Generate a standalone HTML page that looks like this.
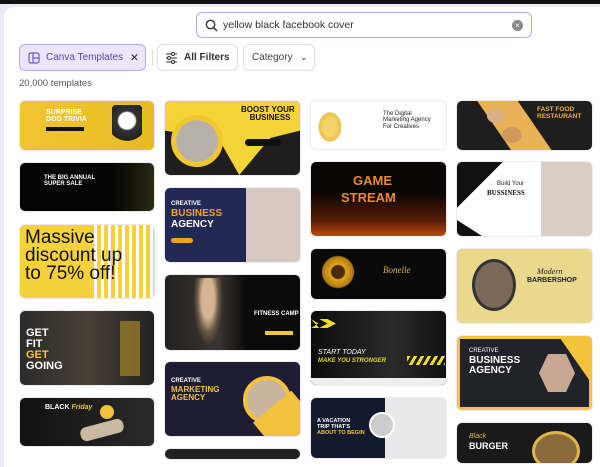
<!DOCTYPE html>
<html><head><meta charset="utf-8"><style>
*{margin:0;padding:0;box-sizing:border-box}
body{width:600px;height:452px;overflow:hidden;background:#ecebf5;font-family:"Liberation Sans",sans-serif;position:relative}
.top{position:absolute;left:0;top:0;width:600px;height:4px;background:#111}
.panel{position:absolute;left:4px;top:7px;width:600px;height:460px;background:#fff;border-radius:10px 0 0 0}
.search{position:absolute;left:196px;top:12px;width:336px;height:26px;border:1px solid #b7a9ee;border-radius:6px;background:#fff}
.search .t{position:absolute;left:26px;top:6px;font-size:10.5px;color:#333}
.chip{position:absolute;top:44px;height:27px;border:1px solid #ddd;border-radius:6px;font-size:10.5px;color:#333;background:#fff}
.chip span{position:absolute;top:7px;white-space:nowrap}
.count{position:absolute;left:19px;top:78px;font-size:9.5px;color:#555}
.c{position:absolute;border-radius:5px;overflow:hidden;box-shadow:0 0 0 1px rgba(0,0,0,.08)}
.c b{position:absolute;font-weight:bold;white-space:nowrap;line-height:1}
.img{position:absolute}
</style></head><body>
<div class="top"></div>
<div class="panel"></div>
<div class="search">
<svg style="position:absolute;left:8px;top:6px" width="13" height="13" viewBox="0 0 13 13"><circle cx="5.5" cy="5.5" r="4.2" fill="none" stroke="#333" stroke-width="1.4"/><path d="M8.6 8.6L12 12" stroke="#333" stroke-width="1.5"/></svg>
<span class="t">yellow black facebook cover</span>
<div style="position:absolute;right:8px;top:7px;width:11px;height:11px;border-radius:50%;background:#888;color:#fff;font-size:8px;line-height:11px;text-align:center">×</div>
</div>
<div class="chip" style="left:19px;width:127px;background:#ebe6fd;border-color:#b9a9ee">
<svg style="position:absolute;left:8px;top:7px" width="12" height="12" viewBox="0 0 12 12"><rect x="1" y="1" width="10" height="10" rx="2" fill="none" stroke="#6f55c9" stroke-width="1.2"/><path d="M5 1V11M5 6H11" stroke="#6f55c9" stroke-width="1.2"/></svg>
<span style="left:26px;color:#5a4aa0;font-size:10px">Canva Templates</span><span style="left:110px;color:#222">✕</span></div>
<div style="position:absolute;left:152px;top:50px;width:1px;height:16px;background:#ddd"></div>
<div class="chip" style="left:157px;width:81px">
<svg style="position:absolute;left:7px;top:7px" width="13" height="12" viewBox="0 0 13 12"><path d="M1 2H12M1 6H12M1 10H12" stroke="#333" stroke-width="1"/><circle cx="8" cy="2" r="1.5" fill="#fff" stroke="#333"/><circle cx="4" cy="6" r="1.5" fill="#fff" stroke="#333"/><circle cx="8" cy="10" r="1.5" fill="#fff" stroke="#333"/></svg>
<span style="left:26px;font-weight:bold;font-size:10px">All Filters</span></div>
<div class="chip" style="left:243px;width:72px"><span style="left:8px;color:#444;font-size:10px">Category</span><span style="left:56px;font-size:9px;top:7px">⌄</span></div>
<div class="count">20,000 templates</div>

<!-- col1 -->
<div class="c" style="left:20px;top:101px;width:134px;height:49px;background:linear-gradient(90deg,#f0c530,#e7bb22)">
<b style="left:26px;top:8px;font-size:7px;color:#fff">SURPRISE<br>DOG TRIVIA</b><div class="img" style="left:26px;top:26px;width:38px;height:4px;background:#111"></div>
<div class="img" style="left:92px;top:4px;width:30px;height:45px;background:radial-gradient(circle at 50% 35%,#fff 0 25%,#333 30%,#222 60%,transparent 62%)"></div></div>
<div class="c" style="left:20px;top:163px;width:134px;height:48px;background:linear-gradient(90deg,#050505 70%,#2a2a16)">
<b style="left:24px;top:12px;font-size:6px;color:#fff">THE BIG ANNUAL<br>SUPER SALE</b></div>
<div class="c" style="left:20px;top:225px;width:134px;height:73px;background:repeating-linear-gradient(90deg,#f5d13b 0 4px,#fff 4px 7px)">
<div class="img" style="left:0;top:0;width:74px;height:73px;background:#f5d13b"></div>
<b style="left:5px;top:4px;font-size:19px;color:#111;font-weight:normal;line-height:.95">Massive<br>discount up<br>to 75% off!</b></div>
<div class="c" style="left:20px;top:311px;width:134px;height:74px;background:linear-gradient(90deg,#2b2b2b,#4a4036 50%,#222)">
<b style="left:6px;top:17px;font-size:11px;color:#fff;line-height:1">GET<br>FIT<br><span style="color:#f3c437">GET</span><br>GOING</b>
<div class="img" style="left:100px;top:10px;width:20px;height:55px;background:#b8962c;opacity:.6"></div></div>
<div class="c" style="left:20px;top:398px;width:134px;height:48px;background:linear-gradient(90deg,#111,#2a2a2a)">
<b style="left:25px;top:6px;font-size:7px;color:#fff">BLACK<i style="color:#f0c13a"> Friday</i></b>
<div class="img" style="left:80px;top:7px;width:14px;height:14px;border-radius:50%;background:#f0c13a"></div>
<div class="img" style="left:60px;top:25px;width:44px;height:14px;background:#c9b9a0;border-radius:6px;transform:rotate(-15deg)"></div></div>

<!-- col2 -->
<div class="c" style="left:165px;top:101px;width:135px;height:74px;background:#1e1e1e">
<div class="img" style="left:0;top:0;width:135px;height:74px;background:#f5d437;clip-path:polygon(0 0,100% 0,100% 40%,78% 50%,55% 100%,40% 52%,0 40%)"></div>
<div class="img" style="left:6px;top:14px;width:52px;height:52px;border-radius:50%;background:#f5d437;border:5px solid #f1c72b;box-shadow:inset 0 0 0 40px #b6b0a8"></div>
<b style="left:76px;top:5px;font-size:8px;color:#111;text-align:center">BOOST YOUR<br>&nbsp;&nbsp;BUSINESS</b>
<div class="img" style="left:80px;top:38px;width:36px;height:7px;border-radius:4px;background:#111"></div></div>
<div class="c" style="left:165px;top:188px;width:135px;height:74px;background:linear-gradient(90deg,#232955 60%,#d7c9c2 60%)">
<b style="left:6px;top:13px;font-size:6px;color:#fff">CREATIVE</b><b style="left:6px;top:21px;font-size:10px;color:#f2a22b">BUSINESS</b><b style="left:6px;top:32px;font-size:10px;color:#fff">AGENCY</b>
<div class="img" style="left:6px;top:50px;width:22px;height:5px;border-radius:3px;background:#f2a22b"></div></div>
<div class="c" style="left:165px;top:275px;width:135px;height:75px;background:linear-gradient(90deg,#222 0,#3a3530 40%,#0b0b0b 60%)">
<div class="img" style="left:28px;top:3px;width:30px;height:68px;background:radial-gradient(ellipse at 50% 30%,#d6b493 0 30%,#6d5a48 50%,transparent 70%)"></div>
<b style="left:89px;top:36px;font-size:6px;color:#fff">FITNESS CAMP</b>
<div class="img" style="left:100px;top:56px;width:28px;height:4px;background:#f0c63a"></div></div>
<div class="c" style="left:165px;top:362px;width:135px;height:74px;background:#1f1d33">
<div class="img" style="left:78px;top:14px;width:48px;height:48px;border-radius:50%;background:#c9b4a0;border:4px solid #f2c23c"></div>
<div class="img" style="left:95px;top:40px;width:50px;height:40px;background:#f2c23c;transform:rotate(-40deg)"></div>
<b style="left:6px;top:16px;font-size:6px;color:#fff">CREATIVE</b><b style="left:6px;top:24px;font-size:8px;color:#f2c23c;line-height:1.05">MARKETING<br>AGENCY</b></div>
<div class="c" style="left:165px;top:449px;width:135px;height:10px;background:#222"></div>

<!-- col3 -->
<div class="c" style="left:311px;top:101px;width:135px;height:48px;background:#fff">
<div class="img" style="left:5px;top:8px;width:28px;height:36px;background:radial-gradient(ellipse,#f4d36a 30%,#e8c24a 55%,transparent 60%)"></div>
<b style="left:72px;top:10px;font-size:6px;color:#222;font-weight:normal;line-height:1.05">The Digital<br>Marketing Agency<br>For Creatives</b></div>
<div class="c" style="left:311px;top:162px;width:135px;height:74px;background:linear-gradient(180deg,#080504 40%,#5a1d06 80%,#c14a12)">
<b style="left:42px;top:12px;font-size:13px;color:#e98a2c">GAME</b><b style="left:30px;top:29px;font-size:13px;color:#e98a2c">STREAM</b></div>
<div class="c" style="left:311px;top:249px;width:135px;height:50px;background:#0a0a0a">
<div class="img" style="left:10px;top:4px;width:34px;height:38px;border-radius:50%;background:radial-gradient(circle,#4a2a08 25%,#e0a520 30%,#b07a10 60%,transparent 65%)"></div>
<i style="position:absolute;left:72px;top:16px;font-size:9px;color:#d6b458;font-family:'Liberation Serif',serif">Bonelle</i></div>
<div class="c" style="left:311px;top:311px;width:135px;height:74px;background:linear-gradient(90deg,#0b0b0b,#2b2b2b 60%,#111)">
<div class="img" style="left:0;top:8px;width:25px;height:9px;background:#f0dd23;clip-path:polygon(0 0,30% 50%,0 100%,33% 100%,66% 50%,33% 0,66% 0,100% 50%,66% 100%,33% 100%)"></div>
<b style="left:7px;top:38px;font-size:7px;color:#fff;font-style:italic;font-weight:normal">START TODAY</b>
<b style="left:7px;top:47px;font-size:6px;color:#e6d52a;font-style:italic">MAKE YOU STRONGER</b>
<div class="img" style="left:96px;top:45px;width:38px;height:9px;background:repeating-linear-gradient(120deg,#f0dd23 0 3px,transparent 3px 6px)"></div>
<div class="img" style="left:0;top:67px;width:135px;height:8px;background:#eee"></div></div>
<div class="c" style="left:311px;top:398px;width:135px;height:60px;background:linear-gradient(90deg,#141a2e 55%,#e9e9e9 55%)">
<b style="left:6px;top:20px;font-size:5.5px;color:#fff;line-height:1.1">A VACATION<br>TRIP THAT'S<br><span style="color:#f2c23c">ABOUT TO BEGIN</span></b>
<div class="img" style="left:58px;top:14px;width:26px;height:26px;border-radius:50%;background:#ccc;border:2px solid #fff"></div></div>

<!-- col4 -->
<div class="c" style="left:457px;top:101px;width:135px;height:49px;background:#1e1e1e">
<div class="img" style="left:0;top:0;width:135px;height:49px;background:#eab256;clip-path:polygon(15% 0,45% 0,70% 100%,40% 100%)"></div>
<b style="left:80px;top:6px;font-size:6.5px;color:#f2ae45;line-height:1">FAST FOOD<br>RESTAURANT</b>
<div class="img" style="left:30px;top:8px;width:18px;height:14px;border-radius:50%;background:#d8b088"></div>
<div class="img" style="left:45px;top:26px;width:20px;height:16px;border-radius:50%;background:#d19a5c"></div></div>
<div class="c" style="left:457px;top:162px;width:135px;height:74px;background:linear-gradient(135deg,#111 22%,#fff 22%)">
<div class="img" style="left:84px;top:0;width:51px;height:74px;background:#d9cfc6"></div>
<b style="left:40px;top:19px;font-size:6px;color:#222;font-weight:normal">Build Your</b>
<b style="left:30px;top:28px;font-size:7px;color:#111;font-family:'Liberation Serif',serif">BUSSINESS</b>
<div class="img" style="left:0;top:58px;width:25px;height:16px;background:#111;clip-path:polygon(0 0,100% 100%,0 100%)"></div></div>
<div class="c" style="left:457px;top:249px;width:135px;height:74px;background:#e9d98f">
<div class="img" style="left:15px;top:10px;width:44px;height:52px;border-radius:50%;background:#7b6858;border:3px solid #333"></div>
<i style="position:absolute;left:80px;top:18px;font-size:8px;color:#222;font-family:'Liberation Serif',serif">Modern</i>
<b style="left:70px;top:28px;font-size:7px;color:#222">BARBERSHOP</b></div>
<div class="c" style="left:457px;top:336px;width:135px;height:74px;background:#f2c33b">
<div class="img" style="left:3px;top:3px;width:129px;height:68px;background:#22222a;clip-path:polygon(0 0,78% 0,100% 60%,100% 100%,0 100%)"></div>
<div class="img" style="left:82px;top:18px;width:36px;height:38px;background:#c8a890;clip-path:polygon(25% 0,75% 0,100% 50%,75% 100%,25% 100%,0 50%)"></div>
<b style="left:12px;top:12px;font-size:6px;color:#fff;font-weight:normal">CREATIVE</b>
<b style="left:12px;top:20px;font-size:10px;color:#fff;line-height:1">BUSINESS<br>AGENCY</b></div>
<div class="c" style="left:457px;top:423px;width:135px;height:40px;background:#1a1a1a">
<i style="position:absolute;left:12px;top:10px;font-size:7px;color:#d8b35a">Black</i>
<b style="left:12px;top:19px;font-size:9px;color:#fff">BURGER</b>
<div class="img" style="left:75px;top:8px;width:48px;height:40px;border-radius:50%;background:#8a6a3a;border:3px solid #e0b64c"></div></div>
</body></html>
